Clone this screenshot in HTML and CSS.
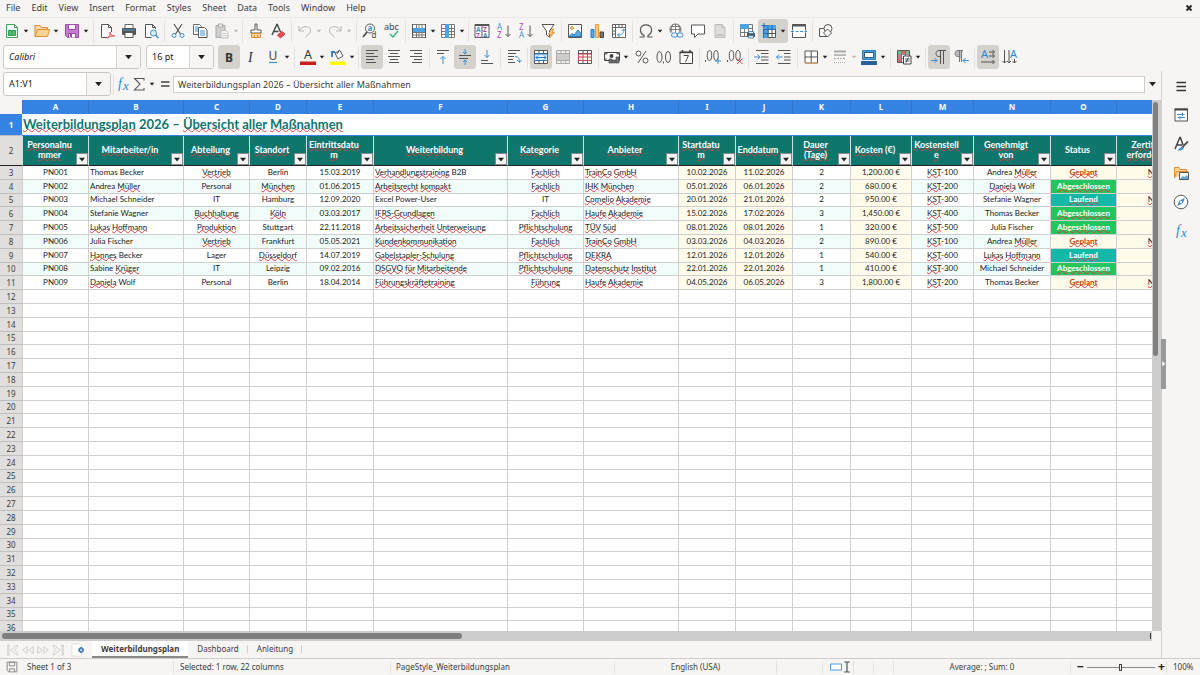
FILE: index.html
```html
<!DOCTYPE html>
<html lang="de">
<head>
<meta charset="utf-8">
<title>Weiterbildungsplan</title>
<link rel="stylesheet" href="styles.css">
</head>
<body>
<svg class="sprite" aria-hidden="true">
  <symbol id="caret" viewBox="0 0 8 5"><path d="M1 .8h6L4 4.6z" fill="currentColor"/></symbol>
  <symbol id="new" viewBox="0 0 16 16"><path d="M2.500 1.500h8l3 3v10h-11z" fill="#fff" stroke="#3fa35c"/><path d="M10.500 1.500v3h3" fill="none" stroke="#3fa35c"/><path d="M4.500 7.500h7v5h-7zM4.500 9h7M4.500 11h7M8 7.500v5" fill="#8fd3a0" stroke="#2f9e50"/></symbol>
  <symbol id="open" viewBox="0 0 16 16"><path d="M1 13.500v-11h5l1.500 2h6v2.500" fill="#f9d9a4" stroke="#dd8a30"/><path d="M1 13.500 3.500 6.500h12l-2 7z" fill="#fbd395" stroke="#e08d35"/></symbol>
  <symbol id="save" viewBox="0 0 16 16"><path d="M1.500 1.500h13v13h-11l-2-2z" fill="#c77bd0" stroke="#9c4aa8"/><path d="M4.500 1.500h7v5h-7z" fill="#fff" stroke="#9c4aa8"/><path d="M4.500 14.500v-4h7v4" fill="#fff" stroke="#9c4aa8"/><path d="M6 11v3h2v-3z" fill="#9c4aa8"/></symbol>
  <symbol id="pdf" viewBox="0 0 16 16"><path d="M12.500 9V4.500l-3-3h-7v13h6" fill="#fafafa" stroke="#555"/><path d="M9.500 1.500v3h3" fill="none" stroke="#555"/><path d="M8 15c2.500-1 3.500-3.500 3-6 .3 2.500 2 4 4.500 4-2.500-.3-5 .3-7.500 2" fill="none" stroke="#dd4a55"/></symbol>
  <symbol id="print" viewBox="0 0 16 16"><path d="M4 1.500h8v4H4z" fill="#fff" stroke="#666"/><rect x="1" y="5" width="14" height="7" rx="1" fill="#555"/><path d="M2 7h12" stroke="#4f97cf"/><path d="M4 9.500h8v5H4z" fill="#fff" stroke="#555"/></symbol>
  <symbol id="preview" viewBox="0 0 16 16"><path d="M12.500 6V4.500l-3-3h-7v13h6" fill="#fafafa" stroke="#555"/><path d="M9.500 1.500v3h3" fill="none" stroke="#555"/><circle cx="10.500" cy="10" r="3" fill="#dcecf8" stroke="#3c8fd0"/><path d="m12.500 12 3 3" stroke="#3c8fd0" stroke-width="1.500"/></symbol>
  <symbol id="cut" viewBox="0 0 16 16"><path d="M4 1l6.500 10M12 1 5.500 11" stroke="#555" stroke-width="1.200"/><circle cx="4" cy="12.500" r="2" fill="none" stroke="#3c8fd0"/><circle cx="12" cy="12.500" r="2" fill="none" stroke="#3c8fd0"/></symbol>
  <symbol id="copy" viewBox="0 0 16 16"><path d="M1.500 1.500h6l2 2v8h-8z" fill="#fff" stroke="#666"/><path d="M3 4h3M3 6h3M3 8h3" stroke="#3c8fd0"/><path d="M6.500 4.500h6l2.500 2.500v7.500H6.500z" fill="#fff" stroke="#555"/><path d="M8 8h5M8 10h5M8 12h5" stroke="#3c8fd0"/></symbol>
  <symbol id="paste" viewBox="0 0 16 16"><path d="M2 2.500h9v12H2z" fill="#d0cfce" stroke="#aaa"/><path d="M4.500 1h4v3h-4z" fill="#eee" stroke="#aaa"/><path d="M7 7.500h5l2 2v5.500H7z" fill="#f4f4f4" stroke="#bbb"/><path d="M8.500 10.500h4M8.500 12.500h4" stroke="#ccc"/></symbol>
  <symbol id="clone" viewBox="0 0 16 16"><path d="M7 1h2v6h4v3H3V7h4z" fill="#fff" stroke="#555"/><path d="M3.500 10.500h9v4h-9z" fill="#fad7a1" stroke="#e08d35"/><path d="M6.500 12v2.500M9.500 12v2.500" stroke="#e08d35"/></symbol>
  <symbol id="clear" viewBox="0 0 16 16"><path d="M2 12 6.800 1.500h.4L10.500 9M3.500 8.500h5" fill="none" stroke="#444" stroke-width="1.400"/><path d="m7.500 12 4.500-3.500 3 2.500-4.500 4z" fill="#e6505a" stroke="#d43642"/></symbol>
  <symbol id="undo" viewBox="0 0 16 16"><path d="M2 3v5h5M2.500 7.500C6 1.500 14 3 13.500 8c-.2 2-2 3.500-5 6" fill="none" stroke="#b5b5b5"/></symbol>
  <symbol id="redo" viewBox="0 0 16 16"><path d="M14 3v5H9M13.500 7.500C10 1.500 2 3 2.500 8c.2 2 2 3.500 5 6" fill="none" stroke="#b5b5b5"/></symbol>
  <symbol id="find" viewBox="0 0 16 16"><circle cx="8" cy="5.500" r="4.500" fill="#fff" stroke="#555"/><path d="M5 9 1 14" stroke="#444" stroke-width="1.600"/><text x="5.500" y="8" font-size="8" font-weight="bold" fill="#3c8fd0">a</text><text x="9.500" y="15" font-size="8" fill="#444">d</text></symbol>
  <symbol id="spell" viewBox="0 0 16 16"><text x="0" y="7" font-size="9" fill="#444">abc</text><path d="m6 11 3 3 5-6" fill="none" stroke="#36b37e" stroke-width="1.400"/></symbol>
  <symbol id="row" viewBox="0 0 16 16"><path d="M1.500 1.500h13v13h-13zM1.500 5.500h13M1.500 9.500h13M1.500 12h13M5.500 1.500v13M8 1.500v13M11 1.500v13" fill="#fff" stroke="#777"/><path d="M1 5h14v4H1z" fill="#4ba3e0"/><path d="M1.500 1v14M14.500 1v14" stroke="#555"/></symbol>
  <symbol id="col" viewBox="0 0 16 16"><path d="M1.500 1.500h13v13h-13zM1.500 5.500h13M1.500 8.500h13M1.500 11.500h13M5.500 1.500v13M8 1.500v13M11.500 1.500v13" fill="#fff" stroke="#777"/><path d="M5 1h4v14H5z" fill="#4ba3e0"/></symbol>
  <symbol id="sort" viewBox="0 0 16 16"><path d="M1 1.500h14v13H1zM8 1.500v13M1 2.500h14" fill="#fff" stroke="#555"/><text x="2" y="9" font-size="6.500" font-weight="bold" fill="#3c8fd0">A</text><text x="2" y="14.500" font-size="6.500" font-weight="bold" fill="#ae4bb8">Z</text><text x="9" y="9" font-size="6.500" font-weight="bold" fill="#ae4bb8">Z</text><text x="9" y="14.500" font-size="6.500" font-weight="bold" fill="#3c8fd0">A</text></symbol>
  <symbol id="asc" viewBox="0 0 16 16"><text x="1" y="7" font-size="8" fill="#3c8fd0">A</text><text x="1" y="15" font-size="8" fill="#ae4bb8">Z</text><path d="M12 2.500v11M9.500 11l2.500 2.500L14.500 11" fill="none" stroke="#555"/></symbol>
  <symbol id="desc" viewBox="0 0 16 16"><text x="1" y="7" font-size="8" fill="#ae4bb8">Z</text><text x="1" y="15" font-size="8" fill="#3c8fd0">A</text><path d="M12 2.500v11M9.500 11l2.500 2.500L14.500 11" fill="none" stroke="#555"/></symbol>
  <symbol id="filter" viewBox="0 0 16 16"><path d="M2 1.500h12L9.500 8v6l-3-2V8z" fill="#fff" stroke="#555"/><path d="m12 6-3.500 5h2.500L9.500 15l5-5.500H12L14 6z" fill="#fbc87c" stroke="#e59a3d"/></symbol>
  <symbol id="image" viewBox="0 0 16 16"><path d="M1.500 1.500h13v13h-13z" fill="#fff" stroke="#555"/><circle cx="5" cy="5" r="1.500" fill="#fbd08a" stroke="#e59a3d"/><path d="m2 13.500 3-3 2 1.500 4-5 3 3.500v3z" fill="#5fa9e0" stroke="#2a7cc0"/></symbol>
  <symbol id="chart" viewBox="0 0 16 16"><path d="M2 6.500h3v8H2z" fill="#5fa9e0" stroke="#2a7cc0"/><path d="M6.500 1.500h3v13h-3z" fill="#fbc87c" stroke="#e59a3d"/><path d="M11 9h3.500v5.500H11z" fill="#777" stroke="#444"/></symbol>
  <symbol id="pivot" viewBox="0 0 16 16"><path d="M1.500 1.500h13v13h-13zM1.500 4.500h13M4.500 1.500v13M8 1.500v3M11 1.500v3M1.500 8h3M1.500 11h3" fill="#fff" stroke="#666"/><path d="M12.500 6c1 4-2 6.500-6 6M10.500 8l2-2 2 2M8.500 10l-2 2 2 2" fill="none" stroke="#3c8fd0"/></symbol>
  <symbol id="omega" viewBox="0 0 16 16"><path d="M1.500 14H6v-1.500C.5 9.500 1.500 1.800 8 1.800s7.500 7.700 2 10.700V14h4.500" fill="none" stroke="#555" stroke-width="1.200"/></symbol>
  <symbol id="link" viewBox="0 0 16 16"><circle cx="7.500" cy="6.500" r="5.500" fill="#fff" stroke="#666"/><path d="M2 6.500h11M3 3.500h9M7.500 1v11M5 1.500c-2 3-2 7 0 10M10 1.500c2 3 2 7 0 10" fill="none" stroke="#666" stroke-width=".8"/><path d="M3 9.500h13V15H3z" fill="#f6f5f4"/><rect x="3.500" y="10" width="6" height="4" rx="2" fill="none" stroke="#3c8fd0"/><rect x="9" y="10" width="6" height="4" rx="2" fill="none" stroke="#3c8fd0"/></symbol>
  <symbol id="comment" viewBox="0 0 16 16"><path d="M1.500 2h13v9H8l-3.500 3.500V11h-3z" fill="#fff" stroke="#555"/></symbol>
  <symbol id="header" viewBox="0 0 16 16"><path d="M3 1.500h7l3 3v10H3z" fill="#ddd" stroke="#bbb"/><path d="M10 1.500v3h3" fill="none" stroke="#bbb"/><path d="M4.500 11h7v2h-7z" fill="#c4c4c4"/></symbol>
  <symbol id="parea" viewBox="0 0 16 16"><path d="M1.500 1.500h12v12h-12zM1.500 5.500h12M1.500 9.500h12M5.500 1.500v12M9.500 1.500v12" fill="#fff" stroke="#777"/><path d="M1 1h9v5H1z" fill="#4ba3e0"/><path d="M8 10h8v4H8z" fill="#555"/><path d="M9.500 8.500h5v2h-5zM9.500 12.500h5v2.500h-5z" fill="#d9ecfa" stroke="#3c6f98" stroke-width=".8"/></symbol>
  <symbol id="freeze" viewBox="0 0 16 16"><path d="M2.500 2.500h12v12h-12zM2.500 6.500h12M2.500 10.500h12M7 2.500v12M11 2.500v12" fill="#fff" stroke="#555"/><path d="M2 2h13v4H7v9H2z" fill="#4ba3e0"/><path d="M7 2v13M2 6.500h13M2.500 6v9M2 10.500h5M11 2v4" stroke="#1e6db0"/><path d="M3 0v5M.5 2.500h5" stroke="#1e6db0"/></symbol>
  <symbol id="split" viewBox="0 0 16 16"><path d="M1.500 1.500h13v13h-13z" fill="#fff" stroke="#555"/><path d="M1 2.500h14" stroke="#555" stroke-width="2"/><path d="M0 8.500h16" stroke="#fff" stroke-width="2"/><path d="M0 8.500h16" stroke="#3c8fd0" stroke-dasharray="3 1.500"/></symbol>
  <symbol id="shapes" viewBox="0 0 16 16"><path d="M1.500 5.500h8v8h-8z" fill="#fafafa" stroke="#555"/><circle cx="10" cy="5.500" r="4" fill="#fafafa" stroke="#555"/><path d="m9.500 6 4 4-4 4-4-4z" fill="#fafafa" stroke="#555"/></symbol>

  <symbol id="bold" viewBox="0 0 16 16"><text x="4" y="12.500" font-size="12" font-weight="bold" fill="#333">B</text></symbol>
  <symbol id="italic" viewBox="0 0 16 16"><text class="serif" x="5" y="13" font-size="14" font-style="italic" fill="#333">I</text></symbol>
  <symbol id="underline" viewBox="0 0 16 16"><text x="3.500" y="11" font-size="12" fill="#444">U</text><path d="M4 13.500h8" stroke="#3c8fd0" stroke-width="1.200"/></symbol>
  <symbol id="fcolor" viewBox="0 0 16 16"><text x="4" y="10" font-size="12.500" fill="#333">A</text><path d="M0 12.500h16v3.500H0z" fill="#c9211e"/></symbol>
  <symbol id="hcolor" viewBox="0 0 16 16"><path d="m5 4 5-2.500 3 5.500-5 3z" fill="#fff" stroke="#555"/><path d="M2 8V3h3" fill="none" stroke="#2a7cc0" stroke-width="1.800"/><path d="M7 5 9.500.8" stroke="#555"/><path d="M0 12.500h16v3.500H0z" fill="#ff0"/></symbol>
  <symbol id="left" viewBox="0 0 16 16"><path d="M2 1.500h12M2 4.500h8M2 7.500h12M2 10.500h8M2 13.500h10" stroke="#555"/></symbol>
  <symbol id="center" viewBox="0 0 16 16"><path d="M2 1.500h12M4 4.500h8M2 7.500h12M4 10.500h8M3 13.500h10" stroke="#555"/></symbol>
  <symbol id="right" viewBox="0 0 16 16"><path d="M2 1.500h12M6 4.500h8M2 7.500h12M6 10.500h8M4 13.500h10" stroke="#555"/></symbol>
  <symbol id="vtop" viewBox="0 0 16 16"><path d="M2 1.500h12M2 4.500h7" stroke="#555"/><path d="M8 15V7.500M5.500 10 8 7.500l2.500 2.500" fill="none" stroke="#3c8fd0"/></symbol>
  <symbol id="vmid" viewBox="0 0 16 16"><path d="M2 6.500h12M2 9.500h9" stroke="#555"/><path d="M8 0v5M6 3l2 2 2-2M8 16v-5M6 13l2-2 2 2" fill="none" stroke="#3c8fd0"/></symbol>
  <symbol id="vbot" viewBox="0 0 16 16"><path d="M2 11.500h7M2 14.500h12" stroke="#555"/><path d="M8 1v7.500M5.500 6 8 8.500 10.500 6" fill="none" stroke="#3c8fd0"/></symbol>
  <symbol id="wrap" viewBox="0 0 16 16"><path d="M2 1.500h12M2 4.500h8M2 7.500h6M2 10.500h5M2 13.500h7" stroke="#555"/><path d="M9 7.500c3 0 4.500 1.500 4.500 5.500M11 11l2.500 2.500L15.500 11" fill="none" stroke="#3c8fd0"/></symbol>
  <symbol id="mcenter" viewBox="0 0 16 16"><path d="M1.500 1.500h13v13h-13zM1.500 4.500h13M1.500 11.500h13M6 1.500v3M10.500 1.500v3M6 11.500v3M10.500 11.500v3" fill="#fff" stroke="#555"/><path d="M1.500 5h13v6.500h-13z" fill="#d9ecfa" stroke="#2a7cc0"/><path d="M3 8.500h10M5 6.500l-2 2 2 2M11 6.500l2 2-2 2" fill="none" stroke="#2a7cc0"/></symbol>
  <symbol id="merge" viewBox="0 0 16 16"><path d="M1.500 1.500h13v13h-13zM1.500 4.500h13M1.500 11.500h13M6 1.500v3M10.500 1.500v3M6 11.500v3M10.500 11.500v3" fill="#eee" stroke="#aaa"/><path d="M2 5h12v6H2z" fill="#ccc"/></symbol>
  <symbol id="unmerge" viewBox="0 0 16 16"><path d="M1.500 1.500h13v13h-13zM1.500 4.500h13M1.500 11.500h13M6 1.500v13M10.500 1.500v13" fill="#fff" stroke="#555"/><path d="M1.500 5h13v6.500h-13zM6 5v6.500M10.500 5v6.500M1.500 8h13" fill="#fff" stroke="#d9434e"/></symbol>
  <symbol id="currency" viewBox="0 0 16 16"><path d="M.5 3.500h15v8H.5z" fill="#fff" stroke="#444"/><path d="M3 3v2H0M13 3v2h3M0 10h3" fill="none" stroke="#444"/><circle cx="7.500" cy="7" r="2" fill="#444"/><path d="M5 10h3v4H5zM8.500 11h3v3h-3zM12 8h3v6h-3z" fill="#777" stroke="#444" stroke-width=".7"/></symbol>
  <symbol id="percent" viewBox="0 0 16 16"><circle cx="4.500" cy="4.500" r="2.500" fill="none" stroke="#555"/><circle cx="11.500" cy="11.500" r="2.500" fill="none" stroke="#555"/><path d="M12 2 4 14" stroke="#555"/></symbol>
  <symbol id="number" viewBox="0 0 16 16"><ellipse cx="3.500" cy="8" rx="2.500" ry="5.500" fill="none" stroke="#555"/><ellipse cx="12" cy="8" rx="2.500" ry="5.500" fill="none" stroke="#555"/><path d="M7.500 12.500v2" stroke="#555"/></symbol>
  <symbol id="date" viewBox="0 0 16 16"><path d="M2 3h12.500v11.500H2z" fill="#fff" stroke="#444"/><path d="M1.500 3.500h13.500M4.500 1v3M12 1v3" stroke="#444" stroke-width="1.500"/><path d="M5.500 6.500h5L7.500 13" fill="none" stroke="#444"/></symbol>
  <symbol id="adddec" viewBox="0 0 16 16"><ellipse cx="4.500" cy="6.500" rx="2.200" ry="5" fill="none" stroke="#555"/><ellipse cx="11" cy="6.500" rx="2.200" ry="5" fill="none" stroke="#555"/><path d="M.5 11v2" stroke="#555"/><path d="M13 9v6M10 12h6" stroke="#3c8fd0"/></symbol>
  <symbol id="deldec" viewBox="0 0 16 16"><ellipse cx="4.500" cy="6.500" rx="2.200" ry="5" fill="none" stroke="#555"/><ellipse cx="11" cy="6.500" rx="2.200" ry="5" fill="none" stroke="#555"/><path d="M.5 11v2" stroke="#555"/><path d="m10 9.500 5.500 5.500M15.500 9.500 10 15" stroke="#d9434e"/></symbol>
  <symbol id="indent" viewBox="0 0 16 16"><path d="M2 1.500h12.500M7 4.500h7.500M7 8h7.500M7 11h7.500M2 14.500h12.500" stroke="#555"/><path d="M0 8h5.500M3.500 5.500 6 8l-2.500 2.500" fill="none" stroke="#3c8fd0"/></symbol>
  <symbol id="outdent" viewBox="0 0 16 16"><path d="M2 1.500h12.500M8 4.500h6.500M8 8h6.500M8 11h6.500M2 14.500h12.500" stroke="#555"/><path d="M.5 8h6M3 5.500.5 8 3 10.500" fill="none" stroke="#3c8fd0"/></symbol>
  <symbol id="borders" viewBox="0 0 16 16"><path d="M2 2h12.500v12H2z" fill="#fff" stroke="#555"/><path d="M8.200 2v12M2 8h12.500" stroke="#555"/><path d="M2 14h12.500" stroke="#e8a15a"/></symbol>
  <symbol id="bstyle" viewBox="0 0 16 16"><path d="M2 2.500h12" stroke="#aaa" stroke-width="2"/><path d="M2 6h12" stroke="#aaa" stroke-width="1.500"/><path d="M2 9.500h12" stroke="#aaa" stroke-dasharray="2 1"/><path d="M2 13.500h12" stroke="#aaa" stroke-dasharray="1 1"/></symbol>
  <symbol id="bcolor" viewBox="0 0 16 16"><path d="M1.500 1.500h13v9h-13z" fill="#4ba3e0" stroke="#2a7cc0"/><path d="M3.500 3.500h9v5h-9z" fill="#fff" stroke="#2b5876"/><path d="M0 12h16v4H0z" fill="#2a6099"/></symbol>
  <symbol id="cond" viewBox="0 0 16 16"><path d="M1.500 1.500h12v12h-12z" fill="#fff" stroke="#555"/><path d="M2 2h4v3H2zM10 2h3v3h-3z" fill="#6cc788"/><path d="M2 6h4v3H2z" fill="#e5737b"/><path d="M6 2h4v3H6zM2 10h4v3H2z" fill="#e8656f"/><path d="M1.500 5.500h12M1.500 9.500h12M5.500 1.500v12M9.500 1.500v12" stroke="#666" stroke-width=".7"/><path d="M7.500 7h7.500v8H7.500z" fill="#fff" stroke="#444"/><path d="M9 10h4.500M9 12h4.500M12.500 8.500l-2.500 5" stroke="#444" stroke-width=".9"/></symbol>
  <symbol id="ltr" viewBox="0 0 16 16"><path d="M15 1.500H8c-4 0-4 6 0 6h1.500V1.500V15M12.500 1.500V15" fill="none" stroke="#555"/><path d="M0 11.500h6M3.500 9 6 11.500 3.500 14" fill="none" stroke="#3c8fd0"/></symbol>
  <symbol id="rtl" viewBox="0 0 16 16"><path d="M10 1.500H5c-4 0-4 6 0 6h1.500V1.500V13M8.500 1.500V13" fill="#bbb" stroke="#777"/><path d="M16 11.500h-6M12.500 9 10 11.500l2.500 2.500" fill="none" stroke="#3c8fd0"/></symbol>
  <symbol id="lr" viewBox="0 0 16 16"><text x="1" y="9" font-size="11" fill="#2a8bd5">A</text><path d="M9 3h5.500M9 7h5.500M1 13h13.500M12.500 1l2 2-2 2M12.500 5l2 2-2 2M12.500 11l2 2-2 2" fill="none" stroke="#555"/></symbol>
  <symbol id="tb" viewBox="0 0 16 16"><text x="8" y="9" font-size="11" fill="#2a8bd5">A</text><path d="M2.500 1v13M7 1v13M12.500 10v4M.5 12l2 2 2-2M5 12l2 2 2-2M10.500 12l2 2 2-2" fill="none" stroke="#555"/></symbol>

  <symbol id="fx" viewBox="0 0 16 16"><text class="serif" x="3" y="12" font-size="14" font-style="italic" fill="#2a8bd5">f</text><text class="serif" x="8" y="13.500" font-size="13" font-style="italic" fill="#2a8bd5">x</text></symbol>
  <symbol id="sigma" viewBox="0 0 16 16"><path d="M13 4.500V2.500H3.500L9 8l-5.500 6H13v-2" fill="none" stroke="#555" stroke-width="1.100"/></symbol>
  <symbol id="equals" viewBox="0 0 16 16"><path d="M4 6h8.500M4 10h8.500" stroke="#444" stroke-width="1.500"/></symbol>
  <symbol id="burger" viewBox="0 0 16 16"><path d="M3.500 4.500h9.500M3.500 8.500h9.500M3.500 12.500h9.500" stroke="#333" stroke-width="1.400"/></symbol>
  <symbol id="props" viewBox="0 0 16 16"><path d="M2 2h12.500v12H2z" fill="#fff" stroke="#555"/><path d="M1.500 2.500h13.500" stroke="#444" stroke-width="2"/><path d="M4 7.500h7.500M4.500 10.500H12M9.500 5.500v3.500M7 9v3.500" stroke="#3c8fd0"/></symbol>
  <symbol id="style" viewBox="0 0 16 16"><path d="M2 13 6.800 1.500h.6L10 9M3.800 9H9" fill="none" stroke="#444" stroke-width="1.500"/><path d="M15 5.500 9.500 11" stroke="#555" stroke-width="1.800"/><path d="M5.500 14c1.500 0 1.500-2.500 3.500-3s2.500 3-3.500 3" fill="#5fa9e0" stroke="#2a7cc0"/></symbol>
  <symbol id="gallery" viewBox="0 0 16 16"><path d="M1.500 13V2.500H6l1.500 2h6V7" fill="#fbd395" stroke="#e08d35"/><path d="M1.500 13 3.500 6.500h12" fill="none" stroke="#e08d35"/><path d="M6.500 7.500h9v7h-9z" fill="#fff" stroke="#555"/><path d="m7 14 2.500-3 2 1 2-2L15 12v2z" fill="#5fa9e0"/></symbol>
  <symbol id="compass" viewBox="0 0 16 16"><circle cx="8" cy="8" r="6.800" fill="#fff" stroke="#555"/><path d="M12 4 9.500 9.500 4 12l2.500-5.500z" fill="#3c8fd0"/><circle cx="8" cy="8" r="1.200" fill="#fff"/></symbol>
  <symbol id="first" viewBox="0 0 16 16"><path d="M2 2v12h1.500V2zM13 2v3L10 8l3 3v3L5.500 8z" fill="none" stroke="#ccc"/></symbol>
  <symbol id="prev" viewBox="0 0 16 16"><path d="M7 4v8L2 8zM14 4v8L9 8z" fill="none" stroke="#ccc"/></symbol>
  <symbol id="next" viewBox="0 0 16 16"><path d="M2 4v8l5-4zM9 4v8l5-4z" fill="none" stroke="#ccc"/></symbol>
  <symbol id="last" viewBox="0 0 16 16"><path d="M14 2v12h-1.500V2zM3 2v3l3 3-3 3v3l7.500-6z" fill="none" stroke="#ccc"/></symbol>
  <symbol id="addsheet" viewBox="0 0 16 16"><path d="M1 1h9l2 2v12H1z" fill="#fff" stroke="#ddd"/><path d="M11.500 5 14 6.500v3L11.500 11 9 9.500v-3z" fill="#4b8fd0" stroke="#2a6099"/><circle cx="11.500" cy="8" r="1" fill="#fff"/></symbol>
  <symbol id="disk" viewBox="0 0 16 16"><path d="M1.500 1.500h13v13h-11l-2-2zM4.500 1.500h7v5h-7zM4.500 14.500v-4h7v4" fill="none" stroke="#888" stroke-width="1.300"/></symbol>
  <symbol id="selmode" viewBox="0 0 22 12"><path d="M1.500 3h11v6h-11z" fill="#fff" stroke="#4b9bd5"/><path d="M15.500 1h2.200M18.300 1h2.200M15.500 11h2.200M18.300 11h2.200M18 1v10" stroke="#333"/></symbol>
</svg>

<header>
  <nav class="menubar" aria-label="Menu">
    <button>File</button><button>Edit</button><button>View</button><button>Insert</button><button>Format</button><button>Styles</button><button>Sheet</button><button>Data</button><button>Tools</button><button>Window</button><button>Help</button>
    <button class="close" aria-label="Close document"><svg class="x" viewBox="0 0 8 8"><path d="m1.500 1.500 5 5M6.500 1.500l-5 5" stroke="#222" stroke-width="1.800"/></svg></button>
  </nav>
  <div class="toolbar" role="toolbar" aria-label="Standard" data-items="new+ open+ save+ | pdf print preview | cut copy paste- | clone clear | undo~ redo~ | find spell | row- col- | sort asc desc filter | image chart pivot | omega+ link comment header | parea freeze!+ split | shapes"></div>
  <div class="toolbar formatting">
    <div class="combo font"><input aria-label="Font name" value="Calibri"><button aria-label="Font list"><svg class="caret big"><use href="#caret"/></svg></button></div>
    <div class="combo size"><input aria-label="Font size" value="16 pt"><button aria-label="Size list"><svg class="caret big"><use href="#caret"/></svg></button></div>
    <div class="tools" role="toolbar" aria-label="Formatting" data-items="bold! italic underline+ | fcolor+ hcolor- | left! center right | vtop vmid! vbot | wrap | mcenter! merge unmerge | currency+ percent number date | adddec deldec | indent outdent | borders- bstyle= bcolor+ | cond+ | ltr! rtl | lr! tb"></div>
  </div>
</header>

<div class="workspace">
  <main class="document">
    <div class="formulabar">
      <div class="combo name"><input aria-label="Name box" value="A1:V1"><button aria-label="Named ranges"><svg class="caret big"><use href="#caret"/></svg></button></div>
      <i class="sep"></i>
      <button class="ftool" aria-label="Function wizard"><svg class="icon"><use href="#fx"/></svg></button>
      <button class="ftool" aria-label="Select function"><svg class="icon"><use href="#sigma"/></svg><svg class="caret"><use href="#caret"/></svg></button>
      <button class="ftool" aria-label="Formula"><svg class="icon"><use href="#equals"/></svg></button>
      <input class="formula" aria-label="Input line" value="Weiterbildungsplan 2026 – Übersicht aller Maßnahmen">
      <button class="expand" aria-label="Expand formula bar"><svg class="caret big"><use href="#caret"/></svg></button>
    </div>
    <div class="sheetarea">
      <div class="gridwrap"><table class="grid" id="grid"></table></div>
      <div class="vscroll"><span></span></div>
    </div>
    <div class="hscroll"><span></span><b></b></div>
    <div class="tabs">
      <button class="nav" aria-label="First sheet"><svg><use href="#first"/></svg></button><button class="nav" aria-label="Previous sheet"><svg><use href="#prev"/></svg></button><button class="nav" aria-label="Next sheet"><svg><use href="#next"/></svg></button><button class="nav" aria-label="Last sheet"><svg><use href="#last"/></svg></button>
      <button class="add" aria-label="Add sheet"><svg><use href="#addsheet"/></svg></button>
      <button class="tab active">Weiterbildungsplan</button><button class="tab">Dashboard</button><button class="tab">Anleitung</button>
    </div>
  </main>
  <aside class="sidebar">
    <button class="handle" aria-label="Hide sidebar"><svg viewBox="0 0 4 6"><path d="M1 1v4l2.500-2z" fill="#fff"/></svg></button>
    <button aria-label="Sidebar settings"><svg class="icon"><use href="#burger"/></svg></button>
    <button aria-label="Properties"><svg class="icon"><use href="#props"/></svg></button>
    <button aria-label="Styles"><svg class="icon"><use href="#style"/></svg></button>
    <button aria-label="Gallery"><svg class="icon"><use href="#gallery"/></svg></button>
    <button aria-label="Navigator"><svg class="icon"><use href="#compass"/></svg></button>
    <button aria-label="Functions"><svg class="icon"><use href="#fx"/></svg></button>
  </aside>
</div>

<footer class="statusbar">
  <span class="disk"><svg><use href="#disk"/></svg></span>
  <span class="sheetno">Sheet 1 of 3</span>
  <span class="sel">Selected: 1 row, 22 columns</span>
  <span class="pstyle">PageStyle_Weiterbildungsplan</span>
  <span class="lang">English (USA)</span>
  <span class="insert"></span>
  <span class="mode"><svg><use href="#selmode"/></svg></span>
  <span class="cell"></span>
  <span class="cell"></span>
  <span class="sum">Average: ; Sum: 0</span>
  <span class="zoom"><button aria-label="Zoom out">−</button><input type="range" aria-label="Zoom" min="0" max="100" value="49"><button aria-label="Zoom in">+</button></span>
  <span class="pct">100%</span>
</footer>
<script src="app.js"></script>
</body>
</html>
```
FILE: styles.css
```css
* { box-sizing: border-box; }
body {
  margin: 0;
  height: 100vh;
  display: flex;
  flex-direction: column;
  overflow: hidden;
  background: #f6f5f4;
  color: #3c3c3c;
  font: 9px/12px "Noto Sans", "Open Sans", sans-serif;
}
button, input {
  margin: 0;
  padding: 0;
  border: 0;
  background: none;
  color: inherit;
  font: inherit;
}
.sprite { display: none; }
symbol text { font-family: "Noto Sans", sans-serif; }
symbol text.serif { font-family: "Liberation Serif", serif; }
.icon { width: 16px; height: 16px; display: block; }
.caret { width: 6px; height: 4px; color: #222; display: block; }
.caret.big { width: 9px; height: 6px; }

.menubar {
  display: flex;
  gap: 1px;
  height: 18px;
  padding: 0 2px 1px 1px;
  border-bottom: 1px solid #e9e8e7;
}
.menubar button { padding: 0 5px; }
.menubar .close { margin-left: auto; }
.x { width: 8px; height: 8px; display: block; }

.toolbar {
  display: flex;
  align-items: center;
  height: 26px;
  padding-left: 1px;
}
.toolbar.formatting { height: 27px; padding: 0 0 1px 3px; }
.tools { display: flex; align-items: center; margin-left: 4px; }
.tool {
  display: flex;
  align-items: center;
  height: 24px;
  padding: 0 3px;
  border-radius: 3px;
}
.tool .caret { margin-right: -1px; margin-left: 3px; }
.tool.narrow .caret { margin-right: -2px; }
.tool.off .caret { color: #bbb; }
.tool.on { background: #d5d1cd; }
.sep { width: 1px; height: 21px; margin: 0 2px; background: #e4e2e0; }

.combo {
  display: flex;
  height: 24px;
  border: 1px solid #cdc7c2;
  border-radius: 3px;
  background: #fff;
  overflow: hidden;
}
.combo input { flex: 1; min-width: 0; padding-left: 5px; color: #222; }
.combo button {
  width: 24px;
  display: grid;
  place-items: center;
  border-left: 1px solid #d8d4d0;
  background: #f6f5f4;
}
.combo.font { width: 138px; }
.combo.font input { font-style: italic; }
.combo.size { width: 68px; margin-left: 5px; }
.combo.name { width: 108px; }

.workspace { flex: 1; min-height: 0; display: flex; }
.document { flex: 1; min-width: 0; display: flex; flex-direction: column; }

.formulabar {
  display: flex;
  align-items: center;
  height: 29px;
  padding: 0 4px 3px 3px;
}
.formulabar .sep { margin: 0 1px 0 2px; }
.ftool { display: flex; align-items: center; }
.ftool .caret { margin: 0 2px; }
.formula {
  flex: 1;
  min-width: 0;
  height: 17px;
  padding-left: 4px;
  border: 1px solid #d0ccc8;
  background: #fff;
}
.expand { width: 12px; display: grid; place-items: end; }

.sheetarea { flex: 1; min-height: 0; display: flex; }
.gridwrap { flex: 1; min-width: 0; overflow: hidden; background: #fff; }
.vscroll { width: 9px; padding: 2px 3px 0 1px; background: #cdcdcd; }
.vscroll span { display: block; height: 48%; border-radius: 3px; background: #7f7f7f; }
.hscroll {
  display: flex;
  justify-content: space-between;
  height: 10px;
  margin-right: 9px;
  padding: 2px 1px 2px 2px;
  background: #cdcdcd;
}
.hscroll span { width: 40%; border-radius: 3px; background: #7f7f7f; }
.hscroll b { width: 1px; background: #333; }

.grid {
  width: 1195px;
  table-layout: fixed;
  border-collapse: separate;
  border-spacing: 0;
  font: 8px/10px Lato, sans-serif;
  color: #222;
}
.grid td, .grid th {
  height: 14px;
  padding: 0 1px;
  border-left: 1px solid #cfcfcf;
  border-bottom: 1px solid #cfcfcf;
  text-align: center;
  white-space: nowrap;
}
.grid td { padding-bottom: 2px; }
.grid tbody tr:nth-child(5n) > * { height: 13px; }
.grid thead th {
  border-color: #2f75c9;
  border-bottom: 0;
  background: #3584e4;
  color: #fff;
  font: bold 8px/12px "Noto Sans", sans-serif;
}
.grid thead th.corner { border-left: 0; background: #f6f5f4; }
.grid .rowno {
  border-left: 0;
  border-bottom-color: #c0bfbe;
  background: #e0dfde;
  color: #3c3c3c;
  font: 8px/12px "Noto Sans", sans-serif;
}
.grid .titlerow .rowno { height: 22px; background: #3584e4; color: #fff; font-weight: bold; }
.grid .titlerow td {
  border-left: 0;
  border-bottom-color: #3584e4;
  text-align: left;
  color: #0f766e;
  font: bold 13px/18px Lato, sans-serif;
}
.grid .fields > * { height: 30px; border-bottom-color: #222; }
.grid .fields td {
  position: relative;
  padding: 0 12px 2px 0;
  border-left-color: #cfe3e1;
  background: #0f766e;
  color: #fff;
  font: bold 9px/10px Lato, sans-serif;
}
.filter {
  position: absolute;
  right: 0;
  bottom: 0;
  width: 12px;
  height: 12px;
  display: grid;
  place-items: center;
  border: 1px solid #888;
  background: #f4f4f4;
}
.filter .caret { width: 8px; height: 5px; }
.grid .left { text-align: left; }
.grid .band td { background: #f0fdfa; }
.grid td.input { background: #fffbeb; }
.grid td.planned { background: #fffbeb; color: #c2410c; font-weight: bold; }
.grid td.running { background: #14b8a6; color: #fff; font-weight: bold; }
.grid td.done { background: #22c55e; color: #fff; font-weight: bold; }
.typo {
  text-decoration: underline wavy #e23a3a 1px;
  text-decoration-skip-ink: none;
  text-underline-offset: -1px;
}

.tabs { display: flex; height: 17px; padding-left: 6px; font-size: 8px; align-items: stretch; }
.nav { width: 15px; }
.nav svg { width: 14px; height: 14px; display: block; }
.add { width: 18px; margin: 0 3px 0 5px; }
.add svg { width: 14px; height: 14px; display: block; }
.tab { position: relative; padding: 0 9px 2px; }
.tab + .tab::after { content: ""; position: absolute; right: 0; top: 4px; height: 8px; border-right: 1px solid #cfcfcf; }
.tab.active { padding: 0 9px; background: #fff; border-bottom: 2px solid #8a8a8a; font-weight: bold; }

.sidebar {
  position: relative;
  width: 39px;
  display: flex;
  flex-direction: column;
  border-left: 1px solid #d0cfce;
}
.sidebar button { height: 29px; padding-left: 11px; }
.sidebar .handle {
  position: absolute;
  left: -1px;
  top: 268px;
  width: 5px;
  height: 50px;
  padding: 0;
  background: #9a9a9a;
}

.statusbar {
  display: flex;
  align-items: center;
  height: 17px;
  border-top: 1px solid #cfcdcb;
  font-size: 8px;
}
.statusbar > span { height: 13px; border-right: 1px solid #e4e2e0; }
.statusbar .disk { width: 27px; padding-left: 6px; border: 0; }
.disk svg { width: 12px; height: 12px; display: block; }
.statusbar .sheetno { width: 147px; }
.statusbar .sel { width: 217px; padding-left: 6px; }
.statusbar .pstyle { width: 224px; padding-left: 5px; }
.statusbar .lang { flex: 1; text-align: center; }
.statusbar .insert { width: 46px; }
.statusbar .mode { width: 31px; padding-left: 6px; }
.mode svg { width: 22px; height: 12px; display: block; }
.statusbar .cell { width: 20px; }
.statusbar .sum { width: 177px; text-align: center; }
.statusbar .zoom { width: 96px; display: flex; align-items: center; padding-left: 5px; }
.zoom button { width: 9px; font-size: 12px; font-weight: bold; color: #222; }
.zoom input { flex: 1; min-width: 0; height: 9px; appearance: none; margin: 0 2px; }
.zoom input::-webkit-slider-runnable-track { height: 1px; background: #888; }
.zoom input::-webkit-slider-thumb { appearance: none; width: 3px; height: 7px; margin-top: -3px; border: 1px solid #444; background: #eee; }
.statusbar .pct { width: 33px; padding-left: 6px; border: 0; }
```
FILE: app.js
```js
const NAMES = { new: "New", open: "Open", save: "Save", pdf: "Export as PDF", print: "Print", cut: "Cut", copy: "Copy", paste: "Paste" };

// Suffixes: + menu arrow, - tight menu arrow, ~ disabled menu, = disabled tight menu, ! pressed
document.querySelectorAll("[data-items]").forEach(bar => {
  bar.innerHTML = bar.dataset.items.split(" ").map(item => {
    if (item === "|") return '<i class="sep"></i>';
    const id = item.match(/^[a-z]+/)[0];
    const flags = item.slice(id.length);
    const cls = ["tool"];
    if (flags.includes("!")) cls.push("on");
    if (/[-=]/.test(flags)) cls.push("narrow");
    if (/[~=]/.test(flags) || id === "paste") cls.push("off");
    const arrow = /[-+~=]/.test(flags) ? '<svg class="caret"><use href="#caret"/></svg>' : "";
    return `<button class="${cls.join(" ")}" aria-label="${NAMES[id] || id}"><svg class="icon"><use href="#${id}"/></svg>${arrow}</button>`;
  }).join("");
});

const WIDTHS = [22, 66, 95, 66, 57, 67, 134, 76, 95, 57, 57, 58, 61, 62, 77, 66, 79];
const LETTERS = "ABCDEFGHIJKLMNOP".split("");
// Square brackets mark words flagged by the spell checker
const FIELDS = ["[Personalnu]<br>[mmer]", "[Mitarbeiter/in]", "[Abteilung]", "[Standort]", "[Eintrittsdatu]<br>[m]", "[Weiterbildung]", "[Kategorie]", "[Anbieter]", "[Startdatu]<br>[m]", "[Enddatum]", "[Dauer]<br>[(Tage)]", "[Kosten] (€)", "[Kostenstell]<br>[e]", "[Genehmigt]<br>[von]", "Status", "[Zertifikat]<br>[erforderlich]"];
const ROWS = [
  "PN001|Thomas Becker|[Vertrieb]|Berlin|15.03.2019|[Verhandlungstraining] B2B|[Fachlich]|[TrainCo] [GmbH]|10.02.2026|11.02.2026|2|1,200.00 €|[KST]-100|Andrea [Müller]|[Geplant]|[Nein]",
  "PN002|Andrea [Müller]|Personal|[München]|01.06.2015|[Arbeitsrecht] [kompakt]|[Fachlich]|[IHK] [München]|05.01.2026|06.01.2026|2|680.00 €|[KST]-200|[Daniela] Wolf|[Abgeschlossen]|Ja",
  "PN003|Michael Schneider|IT|Hamburg|12.09.2020|Excel Power-User|IT|[Comelio] [Akademie]|20.01.2026|21.01.2026|2|950.00 €|[KST]-300|Stefanie Wagner|[Laufend]|[Nein]",
  "PN004|Stefanie Wagner|[Buchhaltung]|[Köln]|03.03.2017|[IFRS-Grundlagen]|[Fachlich]|[Haufe] [Akademie]|15.02.2026|17.02.2026|3|1,450.00 €|[KST]-400|Thomas Becker|[Abgeschlossen]|Ja",
  "PN005|[Lukas] [Hoffmann]|[Produktion]|Stuttgart|22.11.2018|[Arbeitssicherheit] [Unterweisung]|[Pflichtschulung]|[TÜV] [Süd]|08.01.2026|08.01.2026|1|320.00 €|[KST]-500|Julia Fischer|[Abgeschlossen]|Ja",
  "PN006|Julia Fischer|[Vertrieb]|Frankfurt|05.05.2021|[Kundenkommunikation]|[Fachlich]|[TrainCo] [GmbH]|03.03.2026|04.03.2026|2|890.00 €|[KST]-100|Andrea [Müller]|[Geplant]|[Nein]",
  "PN007|[Hannes] Becker|Lager|[Düsseldorf]|14.07.2019|[Gabelstapler-Schulung]|[Pflichtschulung]|[DEKRA]|12.01.2026|12.01.2026|1|540.00 €|[KST]-600|[Lukas] [Hoffmann]|[Laufend]|Ja",
  "PN008|Sabine [Krüger]|IT|Leipzig|09.02.2016|[DSGVO] [für] [Mitarbeitende]|[Pflichtschulung]|[Datenschutz] [Institut]|22.01.2026|22.01.2026|1|410.00 €|[KST]-300|Michael Schneider|[Abgeschlossen]|Ja",
  "PN009|[Daniela] Wolf|Personal|Berlin|18.04.2014|[Führungskräftetraining]|[Führung]|[Haufe] [Akademie]|04.05.2026|06.05.2026|3|1,800.00 €|[KST]-200|Thomas Becker|[Geplant]|[Nein]"
];
const LEFT = [1, 5, 7];
const INPUT = [8, 9, 11, 15];
const STATE = { "[Geplant]": "planned", "[Laufend]": "running", "[Abgeschlossen]": "done" };
const LAST_ROW = 37;

const mark = s => s.replace(/\[(.+?)\]/g, '<span class="typo">$1</span>');
const rowno = n => `<th class="rowno" scope="row">${n}</th>`;

let html = "<colgroup>" + WIDTHS.map(w => `<col style="width:${w}px">`).join("") + "</colgroup>";
html += '<thead><tr><th class="corner"></th>' + LETTERS.map(l => `<th scope="col">${l}</th>`).join("") + "</tr></thead><tbody>";
html += `<tr class="titlerow">${rowno(1)}<td colspan="16">${mark("[Weiterbildungsplan] 2026 – [Übersicht] [aller] [Maßnahmen]")}</td></tr>`;
html += `<tr class="fields">${rowno(2)}` + FIELDS.map(f => `<td>${mark(f)}<button class="filter" aria-label="Filter"><svg class="caret"><use href="#caret"/></svg></button></td>`).join("") + "</tr>";
ROWS.forEach((line, r) => {
  html += `<tr${r % 2 ? ' class="band"' : ""}>${rowno(r + 3)}` + line.split("|").map((v, c) => {
    const cls = LEFT.includes(c) ? "left" : INPUT.includes(c) ? "input" : STATE[v] || "";
    return `<td class="${cls}">${mark(v)}</td>`;
  }).join("") + "</tr>";
});
for (let n = ROWS.length + 3; n <= LAST_ROW; n++) html += `<tr>${rowno(n)}${"<td></td>".repeat(16)}</tr>`;
document.getElementById("grid").innerHTML = html + "</tbody>";
```
